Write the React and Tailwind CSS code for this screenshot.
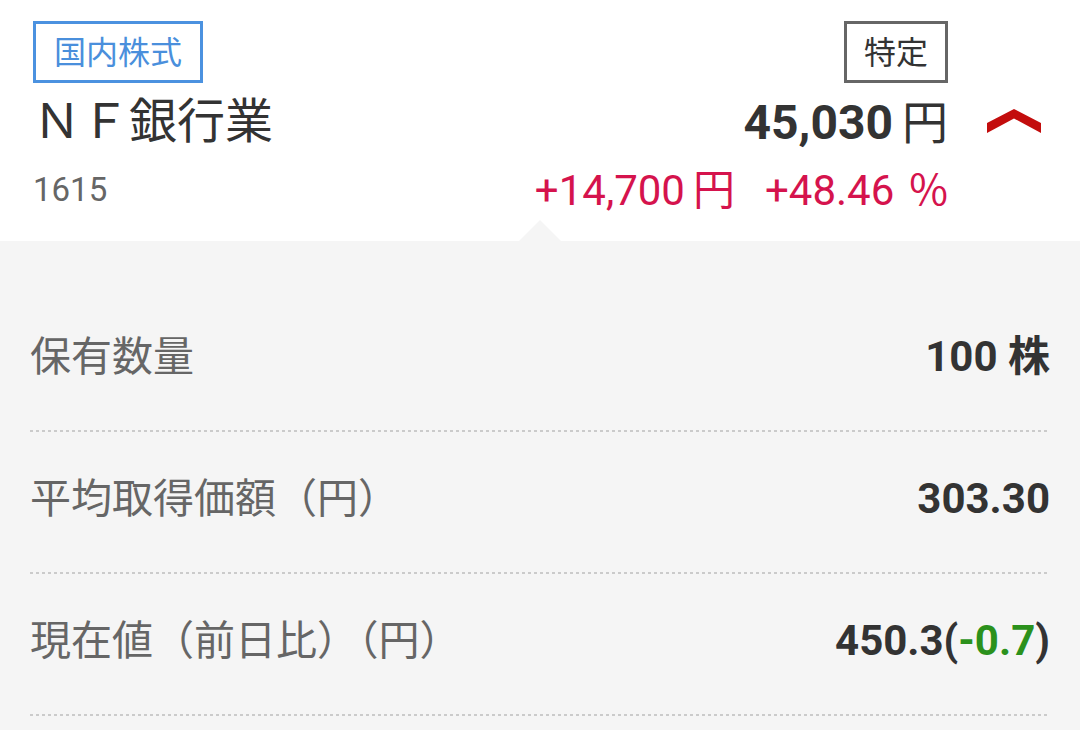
const rows = [
  { label: '保有数量', value: <>100 株</> },
  { label: '平均取得価額（円）', value: <>303.30</> },
  {
    label: '現在値（前日比）（円）',
    value: (
      <>
        450.3(<span className="text-[#2b911c]">-0.7</span>)
      </>
    ),
  },
]

function Chevron() {
  return (
    <svg width="54" height="25" viewBox="0 0 54 25" className="block">
      <polygon points="0,14 27,0 54,14 54,24 27,9.5 0,24" fill="#c30d0d" />
    </svg>
  )
}

function DottedLine() {
  return (
    <div className="h-[2px] bg-[linear-gradient(to_right,#cbcbcb_50%,transparent_50%)] bg-[length:6px_2px] bg-repeat-x" />
  )
}

export default function App() {
  return (
    <div className="w-[1080px] h-[730px] overflow-hidden bg-[#f5f5f5] font-['Roboto','Noto_Sans_CJK_JP',sans-serif]">
      <header className="bg-white pt-[21px] pb-[22px] pl-[33px] pr-[39px]">
        <div className="flex h-[62px] justify-between">
          <div className="flex h-[62px] w-[170px] items-center justify-center border-[3px] border-[#4b92e0] pb-[4px] text-[32px] leading-none text-[#4a8fdc] font-['Noto_Sans_CJK_JP',sans-serif]">
            国内株式
          </div>
          <div className="flex">
            <div className="flex h-[62px] w-[104px] items-center justify-center border-[3px] border-[#666666] pb-[4px] text-[32px] leading-none text-[#333333] font-['Noto_Sans_CJK_JP',sans-serif]">
              特定
            </div>
            <div className="w-[93px]" />
          </div>
        </div>
        <div className="flex h-[76px] items-center justify-between">
          <div className="pb-[8px] text-[48px] leading-none text-[#333333] font-['Noto_Sans_CJK_JP',sans-serif]">
            ＮＦ銀行業
          </div>
          <div className="flex items-center">
            <div className="flex items-baseline leading-none text-[#333333]">
              <span className="text-[48px] font-bold">45,030</span>
              <span className="ml-[9px] text-[46px] font-['Noto_Sans_CJK_JP',sans-serif]">円</span>
            </div>
            <div className="flex w-[93px] justify-end">
              <Chevron />
            </div>
          </div>
        </div>
        <div className="flex h-[60px] items-center justify-between">
          <div className="text-[33px] leading-none text-[#666666]">1615</div>
          <div className="flex items-center">
            <div className="flex items-baseline text-[42px] leading-none text-[#d5134d]">
              <span>+14,700</span>
              <span className="ml-[8px] font-['Noto_Sans_CJK_JP',sans-serif]">円</span>
              <span className="ml-[30px]">+48.46</span>
              <span className="ml-[15px] font-['Noto_Sans_CJK_JP',sans-serif]">%</span>
            </div>
            <div className="w-[93px]" />
          </div>
        </div>
      </header>

      <section className="relative px-[30px] pt-[49px]">
        <div className="absolute left-[519px] top-[-21px] h-0 w-0 border-x-[21px] border-b-[21px] border-x-transparent border-b-[#f5f5f5]" />
        {rows.map((row) => (
          <div key={row.label}>
            <div className="flex h-[134px] items-center justify-between">
              <span className="pb-[8px] text-[41px] leading-none text-[#666666] font-['Noto_Sans_CJK_JP',sans-serif]">
                {row.label}
              </span>
              <span className="text-[42px] font-bold leading-none text-[#333333]">{row.value}</span>
            </div>
            <div className="mt-[6px]">
              <DottedLine />
            </div>
          </div>
        ))}
      </section>
    </div>
  )
}
